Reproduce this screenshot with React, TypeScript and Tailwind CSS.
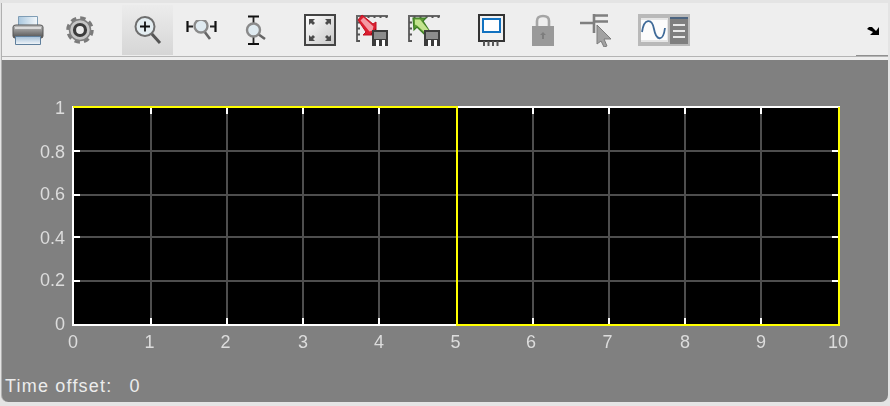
import React from 'react';

const X_TICKS = [
    { label: '0', x: 73, textX: 73 },
    { label: '1', x: 151, textX: 149.5 },
    { label: '2', x: 227, textX: 225.5 },
    { label: '3', x: 303, textX: 303 },
    { label: '4', x: 379, textX: 379 },
    { label: '5', x: 457, textX: 455.5 },
    { label: '6', x: 533, textX: 531 },
    { label: '7', x: 609, textX: 607.5 },
    { label: '8', x: 685, textX: 685 },
    { label: '9', x: 761, textX: 761 },
    { label: '10', x: 839, textX: 838 },
];
const Y_TICKS = [
    { label: '1', y: 107, textY: 107 },
    { label: '0.8', y: 151, textY: 151 },
    { label: '0.6', y: 195, textY: 193 },
    { label: '0.4', y: 237, textY: 237 },
    { label: '0.2', y: 281, textY: 279 },
    { label: '0', y: 325, textY: 323 },
];

function Printer() {
    return (
        <svg width="32" height="30" viewBox="0 0 32 30" className="block">
            <defs>
                <linearGradient id="pb" x1="0" y1="0" x2="0" y2="1">
                    <stop offset="0" stopColor="#c4c4c4" />
                    <stop offset="0.45" stopColor="#8f8f8f" />
                    <stop offset="1" stopColor="#4f4f4f" />
                </linearGradient>
                <linearGradient id="pt" x1="0" y1="0" x2="1" y2="0">
                    <stop offset="0" stopColor="#a9c7de" />
                    <stop offset="1" stopColor="#f4f8fb" />
                </linearGradient>
                <linearGradient id="pp" x1="0" y1="0" x2="0" y2="1">
                    <stop offset="0" stopColor="#a4c0d8" />
                    <stop offset="1" stopColor="#f2f6fa" />
                </linearGradient>
            </defs>
            <path d="M6.500 1.500h19v9h-19z" fill="url(#pt)" stroke="#7f9db5" />
            <path d="M1 12q0-2 3-2h24q3 0 3 2v9q0 2-2 2H3q-2 0-2-2z" fill="url(#pb)" stroke="#555" />
            <rect x="3" y="12" width="26" height="2" fill="#f0f0f0" opacity="0.7" />
            <path d="M3.500 21.500h25v8h-25z" fill="url(#pp)" stroke="#5f7f9c" />
        </svg>
    );
}

function Gear() {
    return (
        <svg width="28" height="28" viewBox="0 0 28 28" className="block">
            <circle cx="14" cy="14" r="12" fill="none" stroke="#7a7a7a" strokeWidth="3.500" strokeDasharray="5.400 4" />
            <circle cx="14" cy="14" r="10.500" fill="#c6c6c6" stroke="#808080" strokeWidth="1.500" />
            <circle cx="14" cy="14" r="5.500" fill="#ececec" stroke="#3c3c3c" strokeWidth="3.200" />
        </svg>
    );
}

function ZoomIn() {
    return (
        <svg width="30" height="30" viewBox="0 0 30 30" className="block">
            <path d="M18 18L27 28" stroke="#555" strokeWidth="3" />
            <circle cx="12" cy="11.500" r="9.500" fill="#e4edf1" stroke="#6e6e6e" strokeWidth="2" />
            <path d="M7 11.500h10M12 6.500v10" stroke="#111" strokeWidth="1.800" />
        </svg>
    );
}

function ZoomX() {
    return (
        <svg width="31" height="20" viewBox="0 0 31 20" className="block">
            <path d="M1.500 1v11M29.500 1v11" stroke="#111" strokeWidth="2.200" />
            <path d="M2 6.500h5M24 6.500h5" stroke="#222" strokeWidth="1.800" />
            <path d="M18 11l6 8" stroke="#666" strokeWidth="2.600" />
            <circle cx="15" cy="6" r="6.500" fill="#dfeaf0" stroke="#8a8a8a" strokeWidth="2.400" />
        </svg>
    );
}

function ZoomY() {
    return (
        <svg width="21" height="30" viewBox="0 0 21 30" className="block">
            <path d="M3 1.500h11M3 29h11" stroke="#111" strokeWidth="2.200" />
            <path d="M8.500 2v6M8.500 22v6" stroke="#222" strokeWidth="1.800" />
            <path d="M13 19l7 5" stroke="#666" strokeWidth="2.600" />
            <circle cx="8.500" cy="15" r="6.500" fill="#dfeaf0" stroke="#8a8a8a" strokeWidth="2.400" />
        </svg>
    );
}

function Fit() {
    return (
        <svg width="32" height="32" viewBox="0 0 32 32" className="block">
            <defs>
                <linearGradient id="fit" x1="0" y1="0" x2="1" y2="1">
                    <stop offset="0" stopColor="#ffffff" />
                    <stop offset="1" stopColor="#c8c8c8" />
                </linearGradient>
            </defs>
            <rect x="1" y="1" width="30" height="30" fill="url(#fit)" stroke="#444" strokeWidth="2" />
            <path d="M5 5h6l-2 2 2 2-2 2-2-2-2 2zM27 5h-6l2 2-2 2 2 2 2-2 2 2zM5 27h6l-2-2 2-2-2-2-2 2-2-2zM27 27h-6l2-2-2-2 2-2 2 2 2-2z" fill="#4c4c4c" />
        </svg>
    );
}

function Ruled({ children }: { children: React.ReactNode }) {
    return (
        <svg width="32" height="32" viewBox="0 0 32 32" className="block">
            <path d="M0 2h32M1 2v26" stroke="#666" strokeWidth="2" fill="none" />
            <path d="M6.500 2v2M12.500 2v2M18.500 2v2M24.500 2v2M30.500 2v2M1 8.500h3M1 14.500h3M1 20.500h3M1 27h3" stroke="#555" strokeWidth="2" />
            {children}
            <rect x="16" y="16" width="16" height="16" fill="#3c3c3c" />
            <rect x="18" y="18" width="12" height="7" fill="#8c8c8c" />
            <rect x="20" y="26" width="3" height="6" fill="#fff" />
            <rect x="26" y="26" width="3" height="6" fill="#fff" />
        </svg>
    );
}

function RedArrow() {
    return (
        <Ruled>
            <path d="M2 6l4-5 11 9 3-2v13H7l3-3z" fill="#dc1f30" stroke="#c01222" strokeWidth="1" />
            <path d="M4.500 6.500l3-3 10 9-1 4-3 1z" fill="#f49aa3" />
            <path d="M8 20.500h12v-6l-3 3-3 3z" fill="#8e0b14" />
        </Ruled>
    );
}

function GreenArrow() {
    return (
        <Ruled>
            <path d="M22 18l-4 4L9 13l-3 3-1-12h13l-3 3z" fill="#5f9c35" stroke="#3d7d25" strokeWidth="1.200" />
            <path d="M7 5.500h5l9 11-3 3-9-8-2-1z" fill="#c3e48e" />
        </Ruled>
    );
}

function BlockIcon() {
    return (
        <svg width="27" height="32" viewBox="0 0 27 32" className="block">
            <rect x="1" y="1" width="25" height="26" fill="#f2f2f2" stroke="#333" strokeWidth="2" />
            <rect x="5" y="5" width="17" height="13" fill="#fff" stroke="#1272c0" strokeWidth="2" />
            <path d="M6 27v5M10.500 27v5M15 27v5M19.500 27v5" stroke="#555" strokeWidth="2" />
        </svg>
    );
}

function Lock() {
    return (
        <svg width="22" height="32" viewBox="0 0 22 32" className="block">
            <path d="M5 13V7q0-5 6-5t6 5v6" fill="none" stroke="#a5a5a5" strokeWidth="2.600" />
            <rect x="0" y="12" width="22" height="20" fill="#999999" />
            <path d="M11 18l3 3h-2v4h-2v-4H8z" fill="#7d7d7d" />
        </svg>
    );
}

function CursorTree() {
    return (
        <svg width="32" height="34" viewBox="0 0 32 34" className="block">
            <path d="M0 10h15M13 2.500h15M13 8.500h15M14 1v19" stroke="#7f7f7f" strokeWidth="2.600" fill="none" />
            <path d="M17 12v19l4-3 3 6 3-1-3-7h7z" fill="#a2a2a2" stroke="#7c7c7c" />
        </svg>
    );
}

function SignalLegend() {
    return (
        <svg width="52" height="32" viewBox="0 0 52 32" className="block">
            <rect width="52" height="32" fill="#b9b9b9" />
            <rect x="3" y="4" width="27" height="24" fill="#e6e6e6" />
            <rect x="3" y="6" width="26" height="20" fill="#fcfcfc" />
            <path d="M4 18c2-14 10-14 12-3s9 14 11-1" fill="none" stroke="#3f6a98" strokeWidth="1.800" />
            <rect x="32" y="3" width="18" height="27" fill="#7f7f7f" />
            <rect x="32" y="3" width="18" height="2" fill="#4c6480" />
            <path d="M35 11h12M35 17h12M35 23h12" stroke="#e8e8e8" strokeWidth="2" />
        </svg>
    );
}

function MoreArrow() {
    return (
        <svg width="14" height="10" viewBox="0 0 14 10" className="block">
            <path d="M13 1v8H4l3-3-6-3 2-2h3l4 4z" fill="#000" />
        </svg>
    );
}

function Toolbar() {
    return (
        <div className="relative flex h-[54px] items-center border-b border-[#b4b4b4] bg-[#eeeeee]">
            <div className="ml-[10px] blur-[0.3px]"><Printer /></div>
            <div className="ml-[22px] blur-[0.3px]"><Gear /></div>
            <div className="ml-[28px] flex h-[50px] w-[51px] items-center justify-center bg-gradient-to-b from-[#ececec] to-[#d6d6d6] blur-[0.3px]">
                <ZoomIn />
            </div>
            <div className="ml-[13px] blur-[0.3px]"><ZoomX /></div>
            <div className="ml-[28px] blur-[0.3px]"><ZoomY /></div>
            <div className="ml-[38px] blur-[0.3px]"><Fit /></div>
            <div className="ml-[20px] blur-[0.3px]"><RedArrow /></div>
            <div className="ml-[20px] blur-[0.3px]"><GreenArrow /></div>
            <div className="ml-[38px] blur-[0.3px]"><BlockIcon /></div>
            <div className="ml-[27px] blur-[0.3px]"><Lock /></div>
            <div className="ml-[26px] blur-[0.3px]"><CursorTree /></div>
            <div className="ml-[26px] blur-[0.3px]"><SignalLegend /></div>
            <div className="ml-[176px] mt-[2px] blur-[0.3px]"><MoreArrow /></div>
            {/* darker stub under the overflow arrow */}
            <div className="absolute bottom-0 right-0 h-px w-[32px] bg-[#8f8f8f]" />
        </div>
    );
}

function Plot() {
    return (
        <svg width="886" height="310" viewBox="0 0 886 310" className="block">
            <g transform="translate(-2 -60)">
                <rect x={73} y={107} width={766} height={218} fill="#000" />
                {X_TICKS.slice(1, 10).map((t) => (
                    <g key={t.label}>
                        <rect x={t.x - 1} y={107} width={2} height={218} fill="#4e4e4e" />
                        <rect x={t.x - 1} y={107} width={2} height={7} fill="#fff" />
                        <rect x={t.x - 1} y={318} width={2} height={7} fill="#fff" />
                    </g>
                ))}
                {Y_TICKS.slice(1, 5).map((t) => (
                    <g key={t.label}>
                        <rect x={73} y={t.y - 1} width={766} height={2} fill="#4e4e4e" />
                        <rect x={73} y={t.y - 1} width={7} height={2} fill="#fff" />
                        <rect x={832} y={t.y - 1} width={7} height={2} fill="#fff" />
                    </g>
                ))}
                {/* white axes first, yellow line sits on top */}
                <rect x={72} y={106} width={2} height={220} fill="#fff" />
                <rect x={72} y={324} width={768} height={2} fill="#fff" />
                <rect x={72} y={106} width={768} height={2} fill="#fff" />
                <rect x={838} y={106} width={2} height={220} fill="#fff" />
                <path d="M73 107H457V325H839V107" fill="none" stroke="#ffff00" strokeWidth="2" />
                <g fontFamily="'Liberation Sans', Arial, sans-serif" fontSize="18" fill="#dcdcdc" className="blur-[0.3px]">
                    {Y_TICKS.map((t) => (
                        <text key={t.label} x={65} y={t.textY + 6.5} textAnchor="end">{t.label}</text>
                    ))}
                    {X_TICKS.map((t) => (
                        <text key={t.label} x={t.textX} y={347.5} textAnchor="middle">{t.label}</text>
                    ))}
                </g>
            </g>
        </svg>
    );
}

export default function App() {
    return (
        <div className="h-[406px] w-[890px] overflow-hidden bg-[#e4e4e4] pt-[3px]" style={{ fontFamily: "'Liberation Sans', Arial, sans-serif" }}>
            <div className="ml-[1px] mr-[2px] h-[399px] overflow-hidden rounded-b-[7px] border-l border-[#b0b0b0] bg-[#808080]">
                <div className="bg-[#eeeeee] pb-[3px]">
                    <Toolbar />
                </div>
                <Plot />
                <div className="flex h-[32px] items-center pl-[3px] text-[18px] leading-none tracking-[1.2px] text-[#ececec]">
                    <span>Time offset:</span>
                    <span className="ml-[17px]">0</span>
                </div>
            </div>
        </div>
    );
}
